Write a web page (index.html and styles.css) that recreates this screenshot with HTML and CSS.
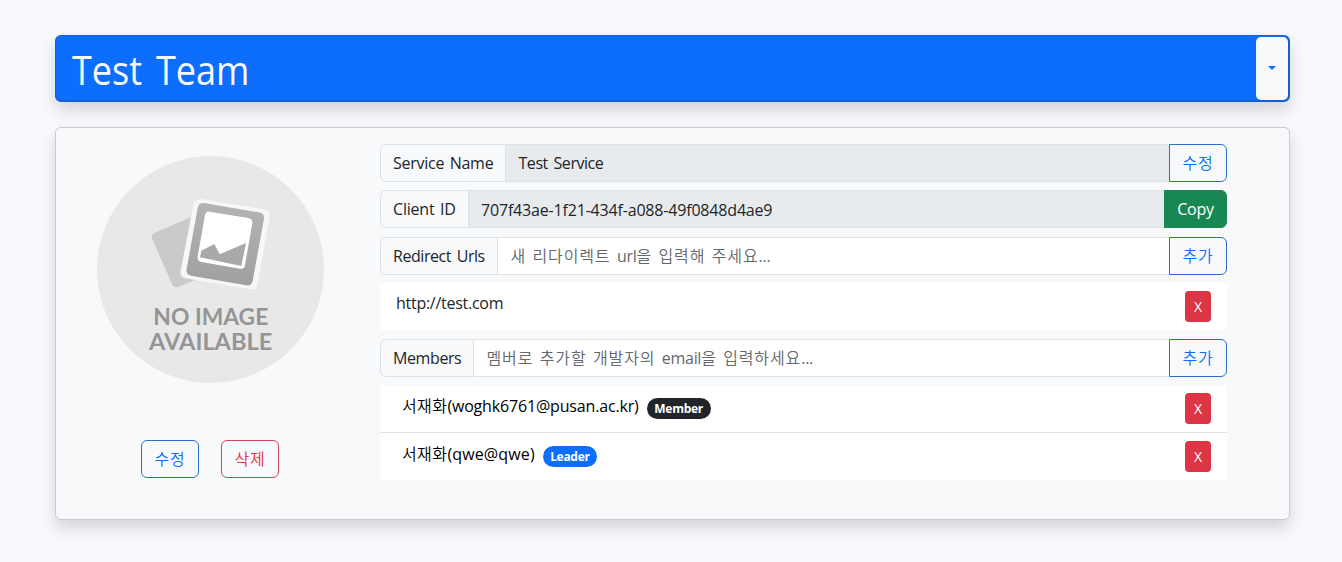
FILE: index.html
```html
<!DOCTYPE html>
<html lang="ko">
<head>
<meta charset="utf-8">
<title>Test Team</title>
<link rel="stylesheet" href="styles.css">
</head>
<body>
<header class="team-bar">
  <h1 class="team-name"><span class="team-name-text">Test Team</span></h1>
  <button class="team-toggle" aria-label="menu"><span class="caret"></span></button>
</header>
<main class="card">
  <section class="profile">
    <svg class="avatar" viewBox="50 49 681 681">
      <defs><linearGradient id="frame" x1="0" y1="0" x2="0" y2="1"><stop offset="0" stop-color="#b4b4b4"/><stop offset="1" stop-color="#a0a0a0"/></linearGradient></defs>
      <circle cx="390.500" cy="389.500" r="340.500" fill="#e8e8e8"/>
      <path d="M335 231L224 279Q211 285 216 298L275 433Q281 447 296 441L350 419Z" fill="#cacaca"/>
      <path d="M362 178L552 209Q571 213 568 231L532 433Q528 452 510 449L315 416Q297 412 301 393L339 196Q344 176 362 178Z" fill="#f7f7f7"/>
      <path d="M371 190L535 218Q553 221 551 238L517 423Q514 440 497 437L333 408Q316 405 319 388L352 205Q355 188 371 190Z" fill="url(#frame)"/>
      <path d="M388 216L504 235Q518 238 516 251L494 376Q492 389 479 387L364 367Q350 364 352 350L374 227Q377 214 388 216Z" fill="#fff"/>
      <path d="M363 333L402 313L418 344L497 310L483 379L359 353Z" fill="#a9a9a9"/>
      <g class="avatar-text">
        <text x="219" y="555" textLength="345" lengthAdjust="spacingAndGlyphs">NO IMAGE</text>
        <text x="206" y="631" textLength="370" lengthAdjust="spacingAndGlyphs">AVAILABLE</text>
      </g>
    </svg>
    <div class="profile-actions">
      <button class="btn btn-primary">수정</button>
      <button class="btn btn-danger">삭제</button>
    </div>
  </section>
  <section class="details">
    <div class="group">
      <span class="label label-service">Service Name</span>
      <span class="field disabled"><span class="t-service">Test Service</span></span>
      <button class="btn btn-primary btn-end">수정</button>
    </div>
    <div class="group">
      <span class="label label-client">Client ID</span>
      <span class="field disabled field-id"><span class="t-id">707f43ae-1f21-434f-a088-49f0848d4ae9</span></span>
      <button class="btn btn-copy btn-end">Copy</button>
    </div>
    <div class="group group-urls">
      <span class="label label-urls">Redirect Urls</span>
      <span class="field placeholder">새 리다이렉트 <span class="latin">url</span>을 입력해 주세요<span class="dots">...</span></span>
      <button class="btn btn-primary btn-end">추가</button>
    </div>
    <ul class="list">
      <li class="item item-url"><span class="t-url">http://test.com</span><button class="remove">X</button></li>
    </ul>
    <div class="group group-members">
      <span class="label label-members">Members</span>
      <span class="field placeholder">멤버로 추가할 개발자의 <span class="latin">email</span>을 입력하세요<span class="dots">...</span></span>
      <button class="btn btn-primary btn-end">추가</button>
    </div>
    <ul class="list">
      <li class="item item-member"><span><span class="name">서재화</span><span class="t-member">(woghk6761@pusan.ac.kr)</span></span><span class="badge badge-member">Member</span><button class="remove">X</button></li>
      <li class="item item-member"><span><span class="name">서재화</span><span class="t-leader">(qwe@qwe)</span></span><span class="badge badge-leader">Leader</span><button class="remove">X</button></li>
    </ul>
  </section>
</main>
</body>
</html>
```
FILE: styles.css
```css
* { box-sizing: border-box; }
body {
  margin: 0;
  height: 562px;
  padding: 35px 52px 0 55px;
  background: #f8f9fd;
  color: #212529;
  font-family: "Open Sans", "Noto Sans CJK KR", sans-serif;
  font-size: 16px;
  line-height: 24px;
}
button { font: inherit; margin: 0; padding: 0; }
.team-bar {
  display: flex;
  height: 67px;
  border: 1px solid #1660cd;
  border-width: 1px 2px 2px 1px;
  border-radius: 6px;
  background: #0d6efd;
  box-shadow: 0 8px 16px rgba(0, 0, 0, .15);
}
.team-name {
  flex: 1;
  margin: 0;
  padding: 5px 0 0 16px;
  color: #f8f9fa;
  font-size: 40px;
  line-height: 58px;
  font-weight: 400;
}
.team-name-text {
  display: inline-block;
  word-spacing: 5px;
  transform: scaleX(.9);
  transform-origin: left;
}
.team-toggle {
  display: flex;
  align-items: center;
  justify-content: center;
  width: 32px;
  margin-top: 1px;
  border: 0;
  border-radius: 5px;
  background: #f8f9fa;
}
.caret { margin-bottom: 2px; border: 4px solid transparent; border-top-color: #0d6efd; border-bottom: 0; }
.card {
  display: flex;
  height: 393px;
  margin-top: 25px;
  border: 1px solid #c9cbcf;
  border-radius: 6px;
  background: #f8f9fb;
  box-shadow: 0 8px 16px rgba(0, 0, 0, .15);
}
.profile {
  display: flex;
  flex-direction: column;
  align-items: center;
  width: 308px;
  padding-top: 28px;
}
.avatar { width: 227px; height: 227px; }
.avatar-text { fill: #959595; font-family: Lato, sans-serif; font-size: 69px; font-weight: 700; }
.profile-actions { display: flex; gap: 22px; margin-top: 57px; }
.btn {
  width: 58px;
  height: 38px;
  border: 1px solid;
  border-radius: 6px;
  background: #f8f9fa;
}
.btn-primary, .btn-danger {
  padding-bottom: 2px;
  font-family: "Noto Sans CJK KR", sans-serif;
  font-weight: 350;
  letter-spacing: .8px;
}
.btn-primary { color: #0d6efd; border-color: #2a70c8; }
.btn-danger { color: #dc3545; border-color: #ca4655; }
.btn-end { border-radius: 0 6px 6px 0; }
.btn-copy { width: 63px; color: #fff; background: #198754; border-color: #198754; letter-spacing: -.3px; }
.details { width: 847px; margin-left: 16px; padding-top: 16px; }
.group { display: flex; height: 38px; margin-bottom: 8px; }
.group-urls, .group-members { margin-top: 9px; }
.label {
  border: 1px solid #dee2e6;
  border-radius: 6px 0 0 6px;
  padding: 6px 0 0 12px;
  white-space: nowrap;
}
.label-service { width: 126px; letter-spacing: -.25px; word-spacing: 1.5px; }
.label-client { width: 89px; letter-spacing: -.2px; word-spacing: 1.5px; }
.label-urls { width: 118px; letter-spacing: -.45px; word-spacing: 2px; }
.label-members { width: 94px; letter-spacing: -.4px; }
.field {
  flex: 1;
  border: 1px solid #dee2e6;
  border-width: 1px 0;
  padding: 6px 0 0 12.5px;
  background: #fff;
  white-space: nowrap;
}
.disabled { background: #e8ebee; }
.field-id { padding: 7px 0 0 12px; }
.t-service { letter-spacing: -.45px; word-spacing: 2px; }
.t-id { letter-spacing: -.18px; }
.placeholder {
  padding-top: 5px;
  color: #62676c;
  font-family: "Noto Sans CJK KR", sans-serif;
  font-weight: 350;
  letter-spacing: .9px;
  word-spacing: 1px;
}
.latin, .dots { font-family: "Open Sans", sans-serif; font-weight: 400; letter-spacing: -.3px; }
.list { margin: 0; padding: 0; list-style: none; background: #fff; }
.item { display: flex; align-items: flex-start; height: 47px; padding: 8px 16px 0; }
.item + .item { height: 48px; border-top: 1px solid #dee2e6; }
.item-url { padding-left: 16px; }
.item-member { padding-left: 22px; color: #000; }
.item-member > span:first-child { margin-top: 1px; }
.t-url { letter-spacing: -.27px; }
.name { font-weight: 350; letter-spacing: .4px; }
.t-member { letter-spacing: -.17px; }
.t-leader { letter-spacing: .15px; }
.remove {
  width: 26px;
  height: 31px;
  margin-left: auto;
  border: 0;
  border-radius: 4px;
  background: #dc3545;
  color: #fff;
  font-size: 14px;
}
.badge {
  height: 21px;
  margin: 5px 0 0 8px;
  border-radius: 11px;
  color: #fff;
  font-size: 12px;
  line-height: 22px;
  font-weight: 700;
  text-align: center;
  letter-spacing: -.3px;
}
.badge-member { width: 64px; background: #212529; }
.badge-leader { width: 54px; background: #0d6efd; }
```
